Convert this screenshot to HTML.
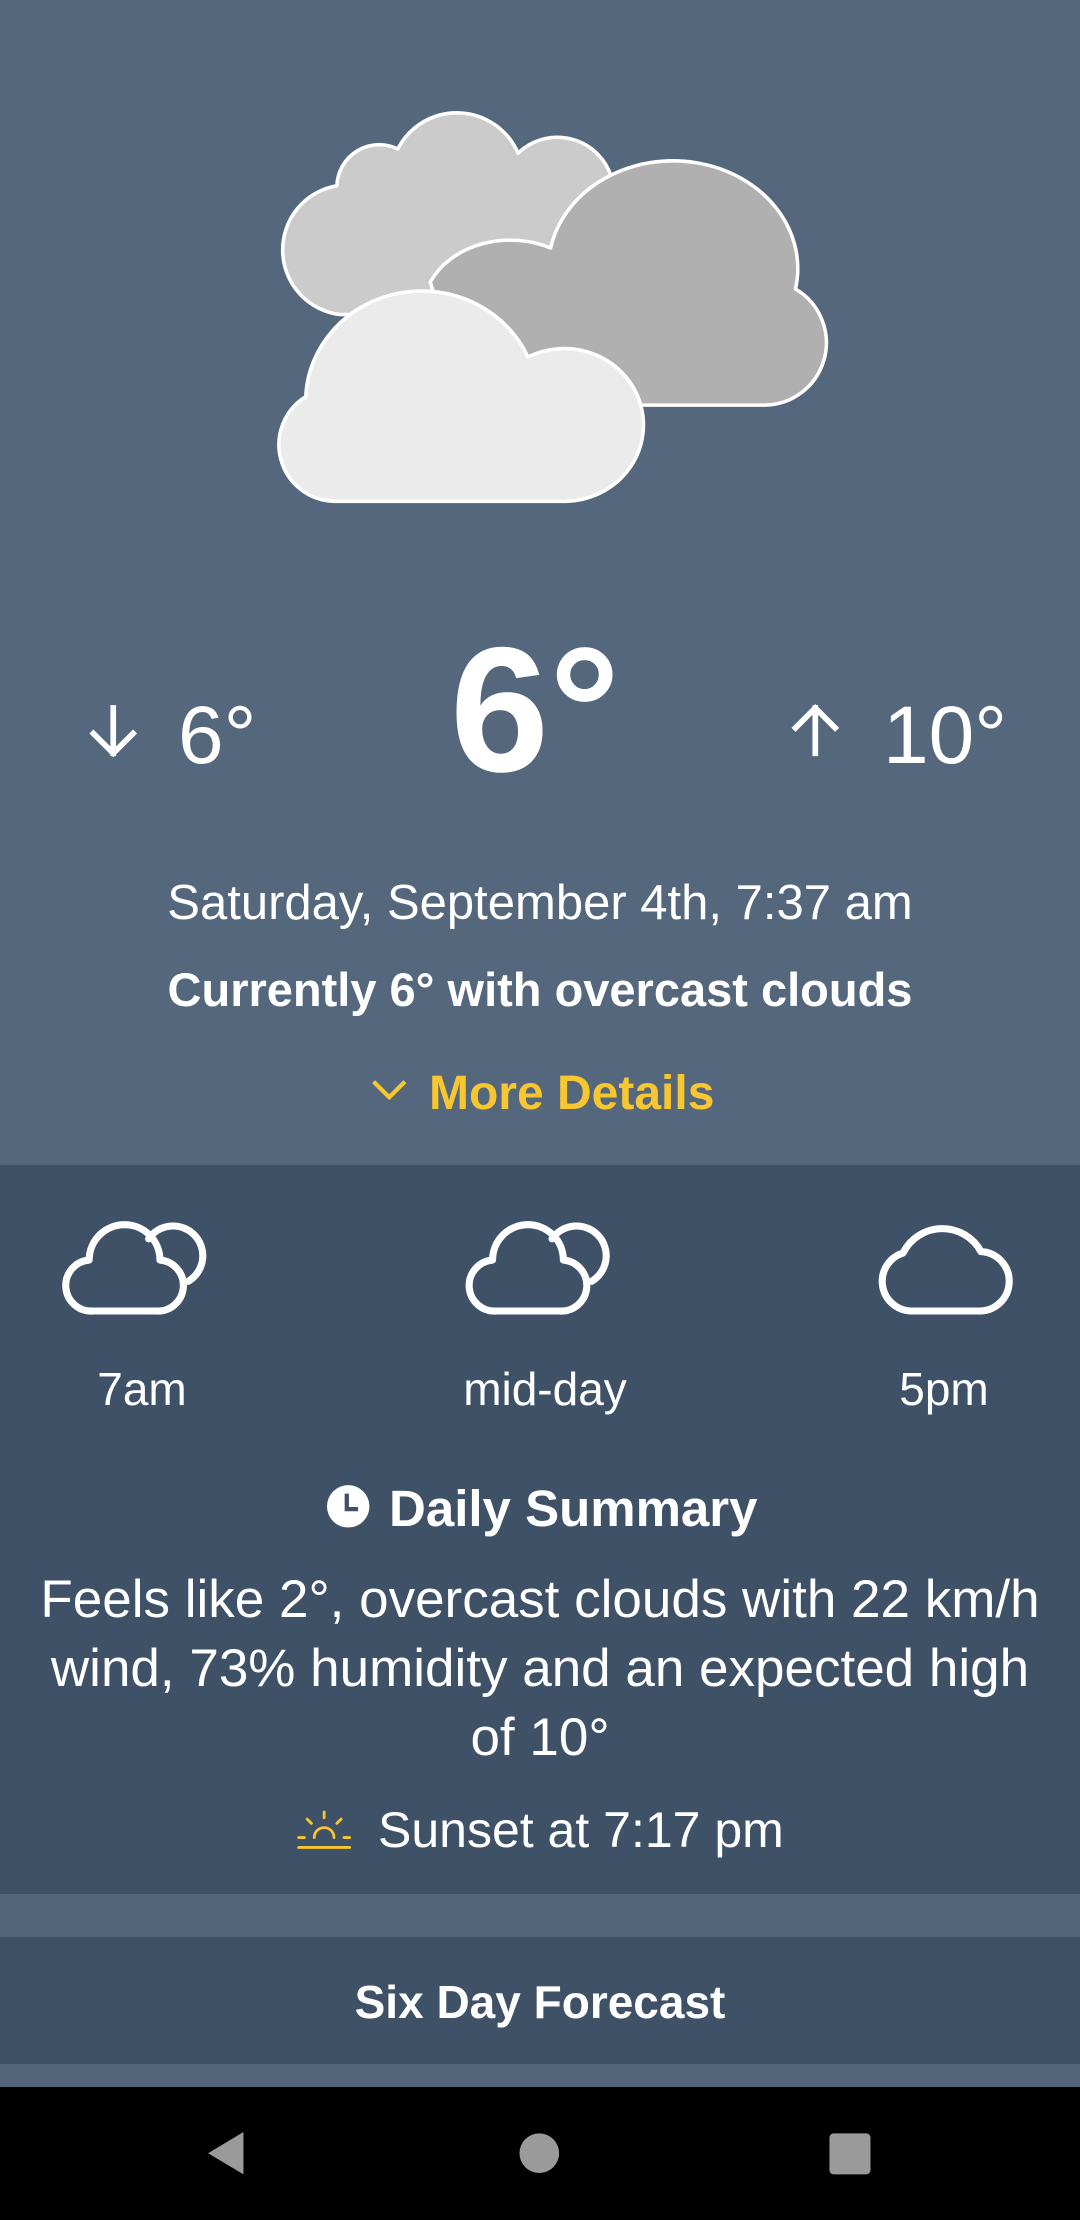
<!DOCTYPE html>
<html><head><meta charset="utf-8"><style>
html,body{margin:0;padding:0}
body{width:1080px;height:2220px;position:relative;overflow:hidden;background:#55677c;font-family:"Liberation Sans",sans-serif;color:#fff}
.t{position:absolute;white-space:nowrap;line-height:1}
.c{left:0;width:1080px;text-align:center}
</style></head><body>
<div style="position:absolute;left:0;top:1165px;width:1080px;height:729px;background:#3f5166"></div>
<div style="position:absolute;left:0;top:1894px;width:1080px;height:43px;background:#52657b"></div>
<div style="position:absolute;left:0;top:1937px;width:1080px;height:127px;background:#3f5166"></div>
<div style="position:absolute;left:0;top:2064px;width:1080px;height:23px;background:#52657b"></div>
<div style="position:absolute;left:0;top:2087px;width:1080px;height:133px;background:#000"></div>

<svg style="position:absolute;left:0;top:0" width="1080" height="2220" viewBox="0 0 763 1568">
 <g stroke="#fff" stroke-width="2.5" stroke-linejoin="round">
  <path d="M240 222 A46 46 0 0 1 238 131 A30 30 0 0 1 281 105 A47 47 0 0 1 366 108 A40 40 0 0 1 432 125 L432 222 Z" fill="#cbcbcb"/>
  <path d="M304 199 A62 50 0 0 1 389 175 A88 76 0 0 1 562 204 A44 44 0 0 1 540 286 L330 286 Z" fill="#b0b0b0"/>
  <path d="M236 354 A40 40 0 0 1 216 280 A82 78 0 0 1 373 252 A56 54 0 1 1 400 354 Z" fill="#ebebeb"/>
 </g>
 <g stroke="#fff" stroke-width="4" fill="none" stroke-linecap="square">
  <path d="M80 500 V532 M66 518 L80 532 L94 518"/>
  <path d="M576 532 V500 M562 514 L576 500 L590 514"/>
  <path d="M265 765 L275 775 L285 765" stroke="#f7c630" stroke-width="3"/>
 </g>
 <g stroke="#fff" stroke-width="5" fill="none" stroke-linecap="round" stroke-linejoin="round">
  <g>
   <path d="M105 875 A21 21 0 1 1 133 905"/>
   <path d="M66 926 H110 A18 18 0 0 0 113 890 A25 25 0 0 0 63 890 A18 18 0 0 0 66 926 Z"/>
  </g>
  <g transform="translate(285 0)">
   <path d="M105 875 A21 21 0 1 1 133 905"/>
   <path d="M66 926 H110 A18 18 0 0 0 113 890 A25 25 0 0 0 63 890 A18 18 0 0 0 66 926 Z"/>
  </g>
  <path d="M643 926 H691 A21 21 0 0 0 693 884 A31 31 0 0 0 638 885 A21 21 0 0 0 643 926 Z"/>
 </g>
 <circle cx="246" cy="1064" r="15" fill="#fff"/>
 <path d="M245 1055 V1066 H253" stroke="#3f5166" stroke-width="3" fill="none"/>
 <g stroke="#f7c630" stroke-width="2" fill="none" stroke-linecap="round">
  <path d="M222 1298 A7 7 0 0 1 236 1298"/>
  <path d="M229 1280 V1284 M217 1285 L220 1288 M241 1285 L238 1288 M211 1298 H215 M243 1298 H247"/>
  <path d="M211 1305 H247"/>
 </g>
 <path d="M172 1506 V1536 L147 1521 Z" fill="#9a9a9a"/>
 <circle cx="381" cy="1521" r="14" fill="#9a9a9a"/>
 <rect x="586" y="1507" width="29" height="29" rx="3" fill="#9a9a9a"/>
</svg>

<div class="t" style="left:450px;top:621px;font-size:178px;font-weight:bold">6°</div>
<div class="t" style="left:178px;top:695px;font-size:82px">6°</div>
<div class="t" style="left:883px;top:695px;font-size:82px">10°</div>
<div class="t c" style="top:879px;font-size:49px">Saturday, September 4th, 7:37 am</div>
<div class="t c" style="top:966px;font-size:47px;font-weight:bold">Currently 6° with overcast clouds</div>
<div class="t" style="left:429px;top:1070px;font-size:48px;font-weight:bold;color:#f7c630">More Details</div>
<div class="t" style="left:42px;width:200px;text-align:center;top:1366px;font-size:46px">7am</div>
<div class="t" style="left:445px;width:200px;text-align:center;top:1366px;font-size:46px">mid-day</div>
<div class="t" style="left:844px;width:200px;text-align:center;top:1366px;font-size:46px">5pm</div>
<div class="t" style="left:389px;top:1483px;font-size:51px;font-weight:bold">Daily Summary</div>
<div class="t c" style="font-size:53px;line-height:69px;white-space:normal;top:1565px">Feels like 2°, overcast clouds with 22 km/h<br>wind, 73% humidity and an expected high<br>of 10°</div>
<div class="t" style="left:378px;top:1805px;font-size:50px">Sunset at 7:17 pm</div>
<div class="t c" style="top:1979px;font-size:46px;font-weight:bold">Six Day Forecast</div>
</body></html>
